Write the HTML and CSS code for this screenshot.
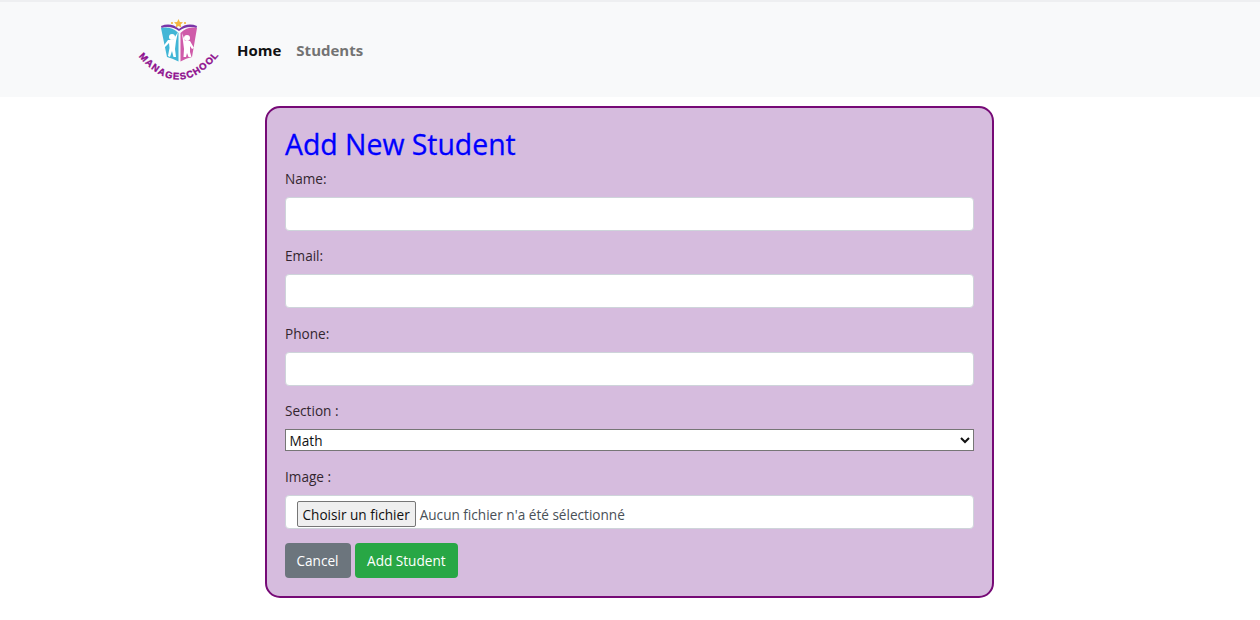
FILE: index.html
```html
<!DOCTYPE html>
<html lang="en">
<head>
<meta charset="utf-8">
<title>Add New Student</title>
<link rel="stylesheet" href="styles.css">
</head>
<body>
<nav class="navbar">
  <svg class="logo" viewBox="0 0 90 68" width="90" height="68" aria-label="ManageSchool logo">
    <path d="M27 10 Q37 6 45 13 Q53 6 63 10 L62.500 12 Q53 9 45 15 Q37 9 27.500 12Z" fill="#7a35a8"/>
    <path d="M44.500 3l1.400 2.900 3.100.4-2.300 2.100.6 3.100-2.800-1.500-2.800 1.500.6-3.100-2.300-2.100 3.100-.4z" fill="#f4b63f"/>
    <circle cx="38" cy="7" r="1.100" fill="#f4b63f"/><circle cx="51" cy="7" r="1.100" fill="#f4b63f"/>
    <path d="M27 12 Q37 10 44.500 17 L44.500 45.500 Q38 42 33 41Z" fill="#42b6d6"/>
    <path d="M46.500 17 Q54 10 63 12 L58 41 Q52 42 46.500 45.500Z" fill="#cf5ba9"/>
    <circle cx="38" cy="21" r="3" fill="#fff"/>
    <path d="M44 16 L42 25 L41 33 L42 41 L39.500 41 L38 35 L36 41 L34 40 L35.500 32 L35 27 L29 33 L28 32 L34 24 L39 24 Z" fill="#fff"/>
    <circle cx="53" cy="22" r="3" fill="#fff"/>
    <path d="M48 17 L51 25 L56 25 L60 32 L58 33 L56 30 L56 36 L57.500 41 L54.500 41 L53 37 L52 41 L49.500 41 L50 33 Z" fill="#fff"/>
    <defs><path id="logo-arc" d="M1 36 Q45 92 89 34"/></defs>
    <text class="logo-text"><textPath href="#logo-arc" startOffset="50%" text-anchor="middle">MANAGESCHOOL</textPath></text>
  </svg>
  <a class="nav-link nav-active" href="#">Home</a>
  <a class="nav-link" href="#">Students</a>
</nav>
<main class="page">
  <form class="card">
    <h2 class="title">Add New Student</h2>
    <div class="group">
      <label class="label" for="name">Name:</label>
      <input class="field" id="name" type="text">
    </div>
    <div class="group">
      <label class="label" for="email">Email:</label>
      <input class="field" id="email" type="text">
    </div>
    <div class="group">
      <label class="label" for="phone">Phone:</label>
      <input class="field" id="phone" type="text">
    </div>
    <div class="group group-select">
      <label class="label" for="section">Section :</label>
      <select class="select" id="section"><option>Math</option></select>
    </div>
    <div class="group group-file">
      <span class="label">Image :</span>
      <div class="field file">
        <button class="file-button" type="button">Choisir un fichier</button>
        <span class="file-name">Aucun fichier n'a été sélectionné</span>
      </div>
    </div>
    <div class="actions">
      <button class="btn btn-cancel" type="button">Cancel</button>
      <button class="btn btn-add" type="button">Add Student</button>
    </div>
  </form>
</main>
</body>
</html>
```
FILE: styles.css
```css
* { box-sizing: border-box; }
body {
  margin: 0;
  background: #fff;
  color: #212529;
  font-family: "Open Sans", "Noto Sans", sans-serif;
  font-size: 13.6px;
}
.navbar {
  display: flex;
  align-items: center;
  height: 97px;
  padding-left: 134px;
  background: #f8f9fa;
  border-top: 2px solid #eeeff1;
}
.logo { display: block; flex: none; margin-right: 13px; overflow: visible; }
.logo-text {
  font-family: "Liberation Sans", sans-serif;
  font-weight: 700;
  font-size: 9.500px;
  letter-spacing: 1.200px;
  fill: #8e0f8e;
  stroke: #8e0f8e;
  stroke-width: 0.35px;
}
.nav-link {
  margin-right: 15px;
  font-size: 15px;
  font-weight: 700;
  color: #737373;
  text-decoration: none;
}
.nav-active { color: #111; }
.page { display: flex; justify-content: center; padding: 9px 2px 0 0; }
.card {
  width: 729px;
  height: 492px;
  padding: 18px;
  background: #d6bcde;
  border: 2px solid #760a76;
  border-radius: 15px;
}
.title {
  margin: 0 0 3.600px;
  padding-left: 0.5px;
  font-size: 28.400px;
  font-weight: 400;
  line-height: 37px;
  color: #0000ff;
  -webkit-text-stroke: 0.3px #0000ff;
}
.group { margin-bottom: 13.500px; }
.group-select { margin-bottom: 14px; }
.group-file { margin-bottom: 14px; }
.label {
  display: block;
  height: 22px;
  margin-bottom: 8px;
  padding-left: 0.5px;
  line-height: 24px;
  color: #33262f;
}
.field {
  display: block;
  width: 100%;
  height: 34px;
  background: #fff;
  border: 1px solid #ced4da;
  border-radius: 4px;
}
.select {
  display: block;
  width: 100%;
  height: 22px;
  padding: 0;
  background: #fff;
  border: 1px solid #767676;
  border-radius: 0;
  color: #111;
  font: inherit;
}
.file {
  display: flex;
  align-items: center;
  padding: 5px 11px 1px;
  color: #495057;
}
.file-button {
  flex: none;
  height: 26px;
  margin-right: 4px;
  padding: 0 5px;
  background: #efefef;
  border: 1px solid #767676;
  border-radius: 2px;
  color: #111;
  font: inherit;
}
.actions { display: flex; gap: 4px; }
.btn {
  height: 35px;
  padding: 0 12px;
  border: 0;
  border-radius: 4px;
  color: #fff;
  font: inherit;
}
.btn-cancel { background: #6c757d; }
.btn-add { padding: 0 12.500px; background: #28a745; }
```
